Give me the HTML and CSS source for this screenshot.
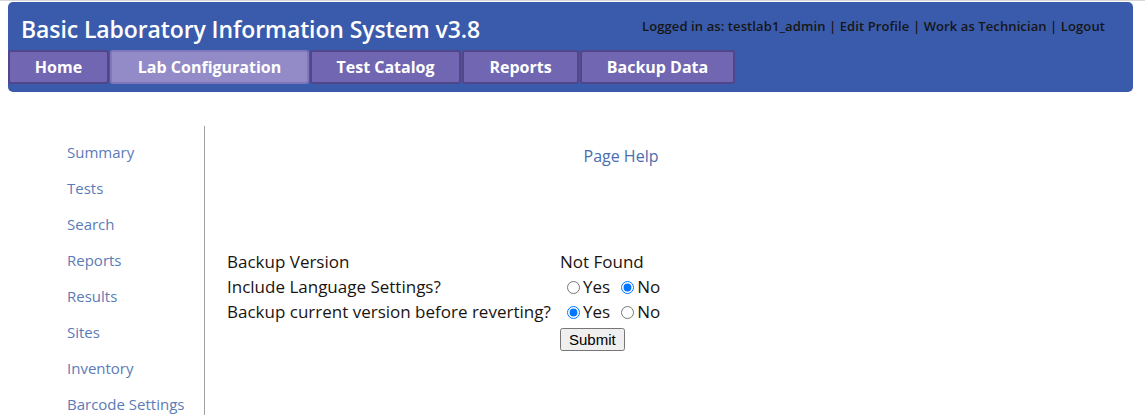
FILE: index.html
```html
<!DOCTYPE html>
<html>
<head>
<meta charset="utf-8">
<link rel="stylesheet" href="styles.css">
</head>
<body>
<div class="topline"></div>
<div class="header">
  <div class="header-top">
    <div class="title">Basic Laboratory Information System v3.8</div>
    <div class="userbar"><span>Logged in as: testlab1_admin</span> | <a>Edit Profile</a> | <a>Work as Technician</a> | <a>Logout</a></div>
  </div>
  <div class="tabs">
    <a class="tab tab-home">Home</a>
    <a class="tab tab-lab active">Lab Configuration</a>
    <a class="tab tab-cat">Test Catalog</a>
    <a class="tab tab-rep">Reports</a>
    <a class="tab tab-bak">Backup Data</a>
  </div>
</div>
<div class="main">
  <div class="sidebar">
    <a>Summary</a>
    <a>Tests</a>
    <a>Search</a>
    <a>Reports</a>
    <a>Results</a>
    <a>Sites</a>
    <a>Inventory</a>
    <a>Barcode Settings</a>
  </div>
  <div class="content">
    <div class="help"><a>Page Help</a></div>
    <table class="form">
      <tr><td class="lbl">Backup Version</td><td class="val">Not Found</td></tr>
      <tr><td class="lbl">Include Language Settings?</td><td class="val radios"><label><input type="radio" name="lang">Yes</label><label><input type="radio" name="lang" checked>No</label></td></tr>
      <tr><td class="lbl">Backup current version before reverting?</td><td class="val radios"><label><input type="radio" name="bk" checked>Yes</label><label><input type="radio" name="bk">No</label></td></tr>
      <tr><td></td><td class="val"><button class="submit">Submit</button></td></tr>
    </table>
  </div>
</div>
</body>
</html>
```
FILE: styles.css
```css
html, body { margin: 0; padding: 0; background: #fff; }
body { font-family: "Open Sans", "DejaVu Sans", sans-serif; color: #1a1410; }
.topline { height: 1px; background: #d8d8d8; margin-bottom: 1px; }
.header {
  margin: 0 12px 0 8px;
  background: #3a5bab;
  border-radius: 5px;
  height: 90px;
  box-sizing: border-box;
}
.header-top { display: flex; justify-content: space-between; align-items: flex-start; height: 48px; }
.title { color: #fff; font-size: 23px; font-weight: 600; padding: 11px 0 0 13px; letter-spacing: -0.1px; }
.userbar { font-size: 13px; font-weight: 600; color: #161616; padding: 15px 28px 0 0; letter-spacing: 0.1px; }
.userbar span, .userbar a { color: #161616; }
.tabs { display: flex; gap: 1px; }
.tab {
  display: flex; align-items: center; justify-content: center;
  height: 34px; box-sizing: border-box;
  background: #7066b2; border: 2px solid #51458c; border-radius: 3px;
  color: #fff; font-weight: 700; font-size: 16px;
}
.tab.active { background: #928bc8; border-color: #7f77bb; }
.tab-home { width: 101px; }
.tab-lab { width: 199px; }
.tab-cat { width: 151px; }
.tab-rep { width: 117px; }
.tab-bak { width: 155px; }
.main { display: flex; padding-top: 34px; }
.sidebar {
  width: 137px; padding-left: 67px; border-right: 1px solid #a0a0a0;
  display: flex; flex-direction: column; padding-top: 15px; gap: 14px;
}
.sidebar a { color: #5b7bb8; font-size: 15px; line-height: 22px; white-space: nowrap; }
.content { flex: 1; }
.help { width: 832px; text-align: center; padding-top: 19px; height: 123px; box-sizing: border-box; font-size: 16px; }
.help a { color: #4a6db0; }
.form { border-collapse: collapse; font-size: 17px; margin-left: 22px; }
.form td { padding: 0; height: 25px; vertical-align: middle; }
.form .lbl { width: 333px; }
.radios label { margin-right: 4px; }
.radios input { margin: 0 3px 0 7px; width: 13px; height: 13px; vertical-align: -1px; }
.submit { font-family: "Liberation Sans", Arial, sans-serif; font-size: 15px; padding: 1px 7px; margin-top: 4px; height: 23px; }
```
